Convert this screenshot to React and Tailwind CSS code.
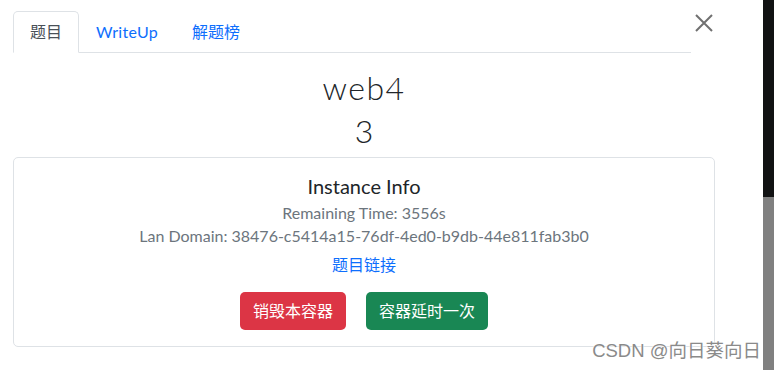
import React from "react";

const font = { fontFamily: "Lato, 'Noto Sans CJK SC', sans-serif" };

export default function App() {
  return (
    <div className="flex h-[370px] w-[774px] overflow-hidden bg-white" style={font}>
      <div className="relative flex-1 pl-[13px] pr-[48px] pt-[11px]">
        {/* Tabs */}
        <div className="flex items-end border-b border-[#dee2e6] mr-[24px]">
          <button className="-mb-px h-[42px] rounded-t-[5px] border border-[#dee2e6] border-b-white bg-white px-4 text-[16px] leading-[24px] text-[#495057]">
            题目
          </button>
          <button className="-mb-px h-[42px] border border-transparent px-4 text-[16px] leading-[24px] tracking-[0.3px] text-[#0d6efd]">
            WriteUp
          </button>
          <button className="-mb-px h-[42px] border border-transparent px-4 text-[16px] leading-[24px] text-[#0d6efd]">
            解题榜
          </button>
        </div>
        <button className="absolute left-[694px] top-[13px] flex h-[20px] w-[20px] items-center justify-center text-[#707070]">
          <svg width="18" height="18" viewBox="0 0 18 18" fill="none" stroke="currentColor" strokeWidth="2">
            <path d="M1 1 L17 17 M17 1 L1 17" />
          </svg>
        </button>

        {/* Title */}
        <div className="mt-[16px] text-center text-[#212529]">
          <h1 className="text-[32px] font-light leading-[38px] tracking-[1.5px]">web4</h1>
          <h2 className="mt-[5px] text-[32px] font-light leading-[38px]">3</h2>
        </div>

        {/* Instance card */}
        <div className="mt-[7px] w-[702px] rounded-[5px] border border-[#dee2e6] px-4 pb-4 pt-4 text-center">
          <h5 className="text-[20px] leading-[24px] text-[#212529]">Instance Info</h5>
          <p className="mt-[3px] text-[16px] leading-[23px] text-[#6c757d]">Remaining Time: 3556s</p>
          <p className="text-[16px] leading-[23px] text-[#6c757d]">
            Lan Domain: 38476-c5414a15-76df-4ed0-b9db-44e811fab3b0
          </p>
          <a className="mt-[6px] block text-[16px] leading-[24px] text-[#0d6efd]">题目链接</a>
          <div className="mt-[15px] flex justify-center gap-[20px]">
            <button className="h-[38px] rounded-[5px] bg-[#dc3545] px-[13px] text-[16px] text-white">销毁本容器</button>
            <button className="h-[38px] rounded-[5px] bg-[#198754] px-[13px] text-[16px] text-white">容器延时一次</button>
          </div>
        </div>

        <div
          className="absolute bottom-[8px] right-[2px] text-[18.5px] leading-[22px] text-[#8a8a8a]"
          style={{ fontFamily: "'Liberation Sans', 'Noto Sans CJK SC', sans-serif", textShadow: "0 0 2px #fff, 0 0 2px #fff" }}
        >
          CSDN @向日葵向日
        </div>
      </div>

      {/* Scrollbar */}
      <div className="flex w-[11px] flex-col">
        <div className="h-[197px] bg-[#111213]" />
        <div className="flex-1 bg-[#808080]" />
      </div>
    </div>
  );
}
